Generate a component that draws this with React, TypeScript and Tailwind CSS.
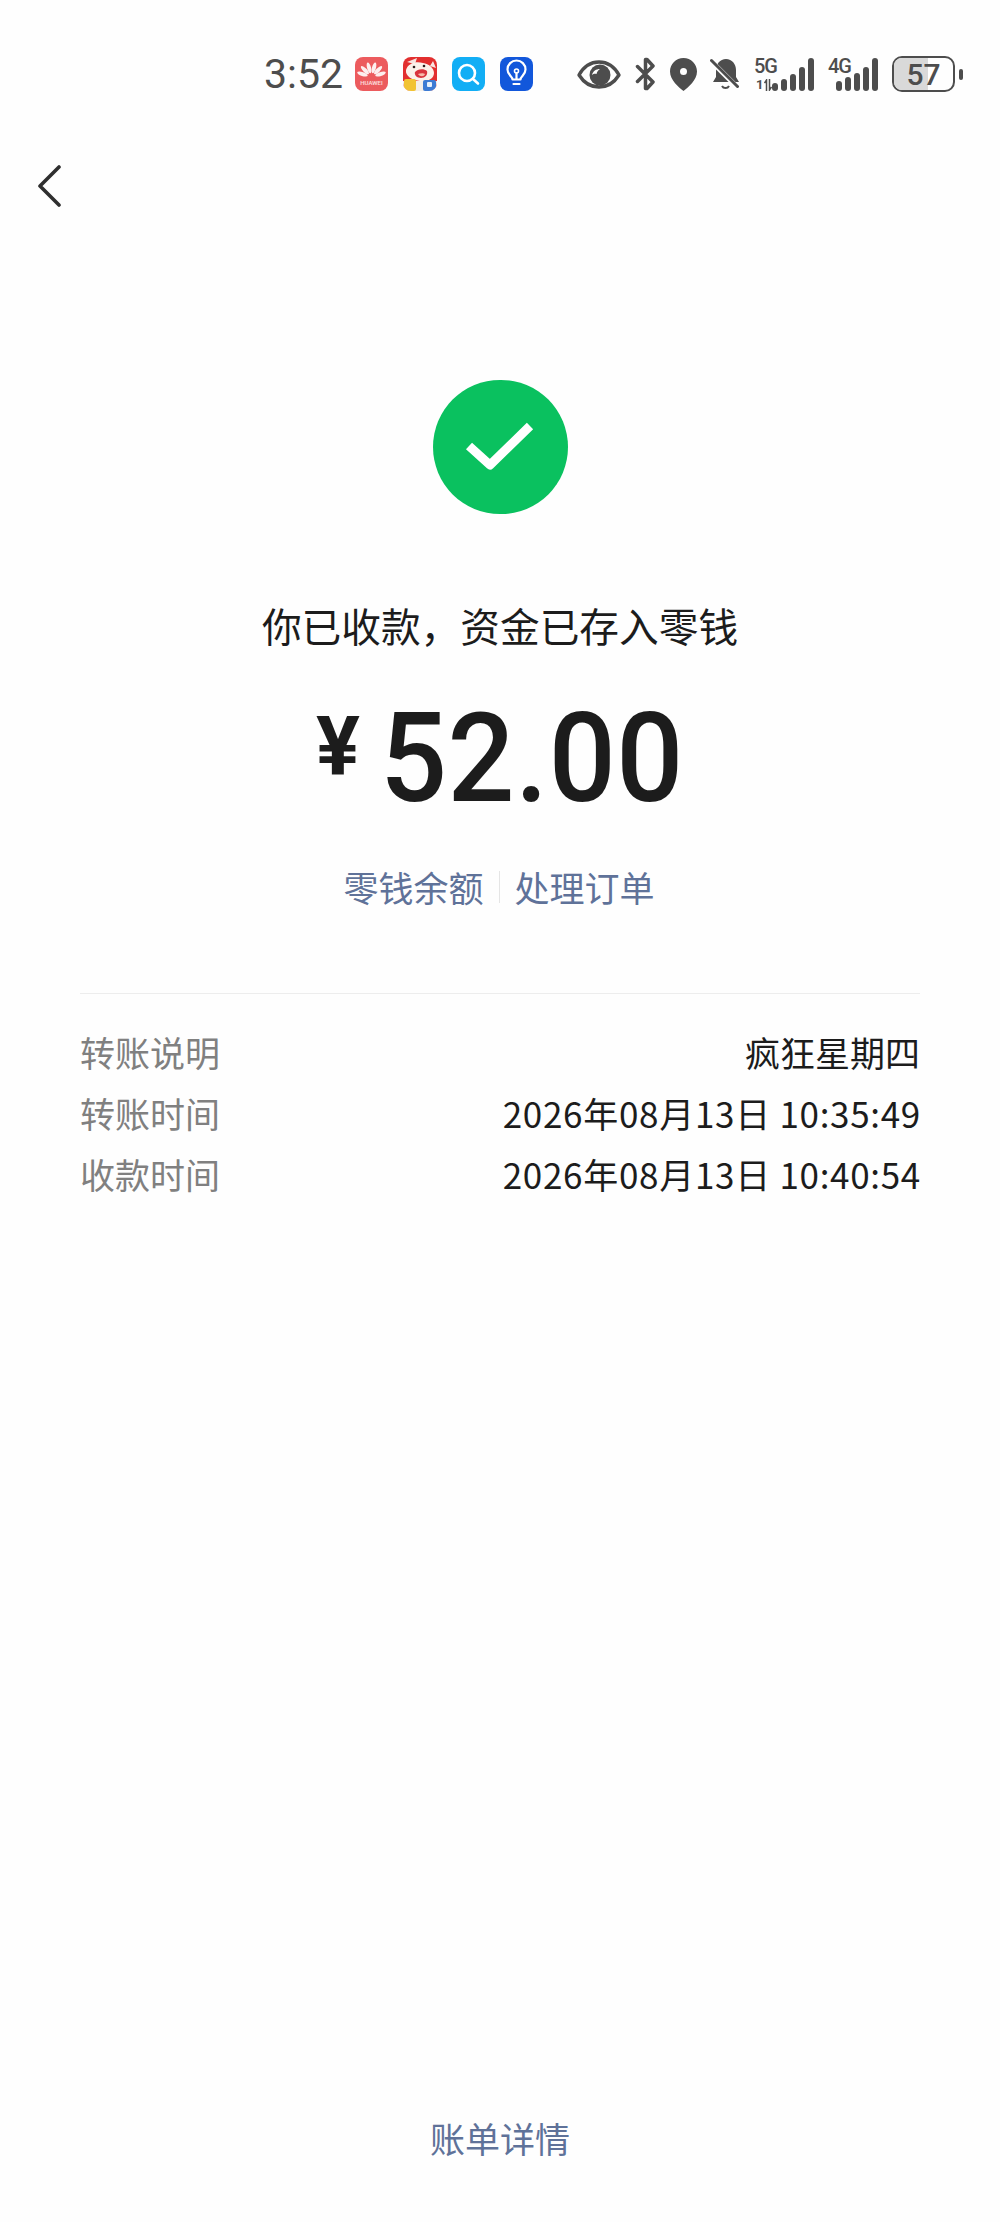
const cjk = '"Noto Sans CJK SC", "Noto Sans", sans-serif';

function Bars({ heights }: { heights: number[] }) {
  return (
    <div className="flex items-end gap-[3px] h-[34px]">
      {heights.map((h, i) => (
        <div key={i} className="w-[6px] rounded-[3px] bg-[#4d4d4d]" style={{ height: h }} />
      ))}
    </div>
  );
}

function HuaweiIcon() {
  const petals = [-72, -44, -15, 15, 44, 72];
  return (
    <div className="relative w-[33px] h-[34px] rounded-[8px] bg-[#ec5b5e]">
      <svg width="33" height="34" viewBox="0 0 33 34">
        {petals.map((a) => (
          <ellipse key={a} cx="16.500" cy="10.500" rx="2" ry="5.500" fill="#fff" opacity="0.9" transform={`rotate(${a} 16.500 20)`} />
        ))}
      </svg>
      <span className="absolute left-0 right-0 top-[22px] text-center text-[6px] leading-[7px] font-medium text-white/80">HUAWEI</span>
    </div>
  );
}

function MascotIcon() {
  return (
    <svg width="34" height="34" viewBox="0 0 34 34" className="rounded-[8px]">
      <rect width="34" height="34" fill="#e22f2f" />
      <path d="M4 5 14 1l-2 6zM30 4l3 7-6-2z" fill="#f8e4e0" />
      <path d="M3 13C5 6 13 4 20 6c6 1 11 5 11 10 0 6-7 9-14 8C9 23 2 19 3 13z" fill="#fbf1ea" />
      <path d="M12 15c2-3 9-4 12-1 1 4-2 7-6 7s-7-3-6-6z" fill="#d9343d" />
      <path d="M15 17c2-1 6-1 7 0-1 3-5 3-7 0z" fill="#f6b9a9" />
      <circle cx="11" cy="10" r="1.300" fill="#2b1c1c" />
      <circle cx="21" cy="9" r="1.300" fill="#2b1c1c" />
      <rect y="24" width="34" height="10" fill="#f4efe9" />
      <rect x="1" y="22" width="12" height="12" rx="2" fill="#f2c333" />
      <rect x="20" y="23" width="13" height="11" rx="2" fill="#3c7bd4" />
      <rect x="24" y="25" width="5" height="5" rx="1" fill="#e6f0fb" />
    </svg>
  );
}

function SearchIcon() {
  return (
    <svg width="33" height="34" viewBox="0 0 33 34" className="rounded-[8px] bg-[#12aef5]">
      <circle cx="15" cy="16" r="8" fill="none" stroke="#fff" strokeWidth="2.600" />
      <path d="M21 22l5 4.500" stroke="#fff" strokeWidth="2.600" strokeLinecap="round" />
    </svg>
  );
}

function BulbIcon() {
  return (
    <svg width="33" height="34" viewBox="0 0 33 34" className="rounded-[8px] bg-[#1257db]">
      <path d="M12.500 22.500c0-3-5-4.500-5-10a9 9 0 0 1 18 0c0 5.500-5 7-5 10z" fill="none" stroke="#fff" strokeWidth="2.200" strokeLinejoin="round" />
      <path d="M16.500 22v-6M13.500 27h6" stroke="#fff" strokeWidth="2.200" strokeLinecap="round" />
      <circle cx="16.500" cy="14" r="2" fill="none" stroke="#fff" strokeWidth="1.600" />
    </svg>
  );
}

function EyeIcon() {
  return (
    <svg width="44" height="29" viewBox="0 0 44 29">
      <path d="M2 15C7 6 14 2 22 2s15 4 20 13c-5 8-12 12-20 12S7 23 2 15z" fill="none" stroke="#4d4d4d" strokeWidth="3.400" strokeLinejoin="round" />
      <circle cx="23" cy="15" r="10.500" fill="#4d4d4d" />
      <path d="M15 15c1-4 4-6 8-6-2 1-3 3-3.500 5-1.500-.5-3-.5-4.500 1z" fill="#fefefe" />
    </svg>
  );
}

function BluetoothIcon() {
  return (
    <svg width="20" height="34" viewBox="0 0 20 34">
      <path d="M2.500 9.500 18 25l-6 6.500h-1.500V2.500H12L18 9 2.500 24.500" fill="none" stroke="#4d4d4d" strokeWidth="3.500" strokeLinecap="round" strokeLinejoin="round" />
    </svg>
  );
}

function PinIcon() {
  return (
    <svg width="27" height="33" viewBox="0 0 27 33">
      <path fillRule="evenodd" d="M13.500 0C6 0 0 6 0 13.500 0 22 9 29.500 13.500 33 18 29.500 27 22 27 13.500 27 6 21 0 13.500 0zm0 10a3.500 3.500 0 1 1 0 7 3.500 3.500 0 0 1 0-7z" fill="#4d4d4d" />
    </svg>
  );
}

function MutedBellIcon() {
  return (
    <svg width="30" height="32" viewBox="0 0 30 32">
      <path d="M16 1c6 0 10 5 10 11v7l3 5H3l3-5v-7C6 6 10 1 16 1z" fill="#4d4d4d" />
      <path d="M0 2l28 28" stroke="#fefefe" strokeWidth="5" />
      <path d="M1.500 2.500l26 26" stroke="#4d4d4d" strokeWidth="3" strokeLinecap="round" />
      <path d="M12 28a4 4 0 0 0 7 0" fill="none" stroke="#4d4d4d" strokeWidth="2" />
    </svg>
  );
}

function DataArrows() {
  return (
    <svg width="8" height="12" viewBox="0 0 8 12">
      <path d="M2.500 12V1L0.500 4M5.500 0v11l2-3" fill="none" stroke="#4d4d4d" strokeWidth="1.500" />
    </svg>
  );
}

function Row({ label, value, wide }: { label: string; value: string; wide?: boolean }) {
  return (
    <div className="flex items-center justify-between h-[61px]">
      <span className="text-[#808080]">{label}</span>
      <span className={wide ? 'text-[#1c1c1c] tracking-[0.7px] -mr-[1px]' : 'text-[#1c1c1c]'}>{value}</span>
    </div>
  );
}

export default function App() {
  return (
    <div className="w-[1000px] h-[2222px] flex flex-col bg-[#fefefe]" style={{ fontFamily: cjk }}>
      {/* status bar */}
      <div className="mt-[56px] h-[36px] flex items-center pl-[264px] text-[#4d4d4d] [font-family:Roboto]">
        <span className="w-[78px] text-[41px] leading-[36px]">3:52</span>
        <div className="ml-[13px] flex items-center gap-[15px]">
          <HuaweiIcon />
          <MascotIcon />
          <SearchIcon />
          <BulbIcon />
        </div>
        <div className="ml-[44px]"><EyeIcon /></div>
        <div className="ml-[14px]"><BluetoothIcon /></div>
        <div className="ml-[15px]"><PinIcon /></div>
        <div className="ml-[13px]"><MutedBellIcon /></div>
        <div className="ml-[14px] relative w-[60px] h-[34px]">
          <span className="absolute left-0 top-[1px] text-[20px] leading-[16px] font-medium tracking-[-1px]">5G</span>
          <div className="absolute left-[2px] bottom-0 flex items-center gap-px">
            <span className="text-[13px] leading-[13px] font-bold">1</span>
            <DataArrows />
          </div>
          <div className="absolute right-0 bottom-0"><Bars heights={[8, 12, 17, 24, 33]} /></div>
        </div>
        <div className="ml-[14px] relative w-[50px] h-[34px]">
          <span className="absolute left-0 top-[1px] text-[20px] leading-[16px] font-medium tracking-[-1px]">4G</span>
          <div className="absolute right-0 bottom-0"><Bars heights={[10, 14, 18, 24, 33]} /></div>
        </div>
        <div className="ml-[14px] relative w-[63px] h-[36px] rounded-[10px] border-[2.500px] border-[#4d4d4d] overflow-hidden flex items-center justify-center">
          <div className="absolute left-0 top-0 bottom-0 w-[57%] bg-[#d9d9d9]" />
          <span className="relative text-[30px] leading-[31px] font-medium">57</span>
        </div>
        <div className="ml-[4px] w-[4px] h-[11px] rounded-[2px] bg-[#4d4d4d]" />
      </div>

      {/* back */}
      <svg className="mt-[73px] ml-[37px] shrink-0" width="24" height="42" viewBox="0 0 24 42">
        <path d="M22 2 3 21l19 19" fill="none" stroke="#2f2f2f" strokeWidth="3.600" strokeLinecap="round" strokeLinejoin="round" />
      </svg>

      {/* result */}
      <div className="flex flex-col items-center">
        <div className="mt-[173px] w-[135px] h-[134px] rounded-full bg-[#0ac15f] flex items-center justify-center">
          <svg width="70" height="52" viewBox="0 0 70 52">
            <path d="M4 25 25 44 65 5" fill="none" stroke="#fff" strokeWidth="9" strokeLinejoin="round" />
          </svg>
        </div>
        <div className="mt-[86px] text-[39.700px] leading-[50px] text-[#1c1c1c]">你已收款，资金已存入零钱</div>
        <div className="mt-[47px] h-[124px] flex items-center text-[#1c1c1c] [font-family:Roboto]">
          <span className="mb-[26px] mr-[20px] text-[82px] leading-[82px] font-bold">¥</span>
          <span className="inline-block scale-y-[1.05] text-[118px] leading-[124px] font-medium tracking-[0.6px]">52.00</span>
        </div>
        <div className="mt-[46px] h-[40px] flex items-center text-[35px] leading-[40px] text-[#5f7299] -translate-x-[1px]">
          <span>零钱余额</span>
          <div className="mx-[15px] w-px h-[32px] bg-[#e5e5e5]" />
          <span>处理订单</span>
        </div>
      </div>

      {/* details */}
      <div className="mt-[86px] mx-[80px] pt-[27px] border-t border-[#ededed] text-[35px] leading-[50px]">
        <Row label="转账说明" value="疯狂星期四" />
        <Row label="转账时间" value="2026年08月13日 10:35:49" wide />
        <Row label="收款时间" value="2026年08月13日 10:40:54" wide />
      </div>

      <div className="mt-auto mb-[59px] text-center text-[35px] leading-[50px] text-[#5f7299]">账单详情</div>
    </div>
  );
}
